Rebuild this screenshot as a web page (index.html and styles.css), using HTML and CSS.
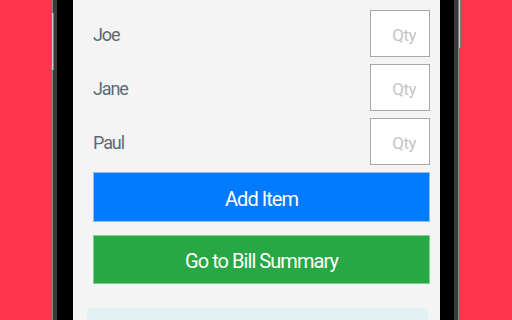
FILE: index.html
```html
<!DOCTYPE html>
<html>
<head>
<meta charset="utf-8">
<link rel="stylesheet" href="styles.css">
</head>
<body>
<div class="stage">
  <div class="bezel bezel-left">
    <span class="side-btn side-btn-left"></span>
  </div>
  <div class="screen">
    <div class="content">
      <div class="row"><span class="name">Joe</span><input class="qty" placeholder="Qty"></div>
      <div class="row"><span class="name">Jane</span><input class="qty" placeholder="Qty"></div>
      <div class="row"><span class="name">Paul</span><input class="qty" placeholder="Qty"></div>
      <button class="btn btn-blue">Add Item</button>
      <button class="btn btn-green">Go to Bill Summary</button>
    </div>
    <div class="info-box"></div>
  </div>
  <div class="bezel bezel-right">
    <span class="side-btn side-btn-right"></span>
  </div>
</div>
</body>
</html>
```

FILE: styles.css
```css
html, body {
  margin: 0;
  padding: 0;
  width: 512px;
  height: 320px;
  overflow: hidden;
  background: #fd344b;
}
.stage {
  display: flex;
  height: 320px;
  padding-left: 52px;
  box-sizing: border-box;
}
.bezel {
  position: relative;
  height: 320px;
  background: #000;
  box-sizing: border-box;
}
.bezel-left {
  width: 21px;
  border-left: 1px solid #8a8a8a;
  box-shadow: inset 4px 0 0 #3a3a3a;
}
.bezel-right {
  width: 19px;
  border-right: 1px solid #8a8a8a;
  box-shadow: inset -4px 0 0 #3a3a3a;
}
.side-btn {
  position: absolute;
  width: 3px;
  background: linear-gradient(90deg, #5a5a5a, #c8c8c8, #5a5a5a);
}
.side-btn-left {
  left: -2px;
  top: 13px;
  height: 57px;
}
.side-btn-right {
  right: -3px;
  top: 0;
  height: 48px;
}
.screen {
  width: 367px;
  height: 320px;
  overflow: hidden;
  background: #f4f4f4;
  box-sizing: border-box;
  padding: 10px 10px 0 20px;
  font-family: Roboto, "Liberation Sans", sans-serif;
}
.content {
  display: flex;
  flex-direction: column;
  width: 337px;
}
.row {
  display: flex;
  align-items: center;
  justify-content: space-between;
  height: 47px;
  margin-bottom: 7px;
}
.name {
  font-size: 18px;
  letter-spacing: -1.1px;
  color: #5c6a72;
  padding-top: 2px;
}
.qty {
  width: 60px;
  height: 47px;
  box-sizing: border-box;
  border: 1px solid #a8a8a8;
  background: #fff;
  font-family: Roboto, "Liberation Sans", sans-serif;
  font-size: 17px;
  letter-spacing: -0.5px;
  text-align: right;
  padding: 2px 13px 0 0;
  outline: none;
}
.qty::placeholder {
  color: #c4c4c4;
}
.btn {
  display: block;
  width: 337px;
  box-sizing: border-box;
  color: #fff;
  font-family: Roboto, "Liberation Sans", sans-serif;
  font-size: 20px;
  letter-spacing: -0.95px;
  padding: 3px 0 0 0;
  margin: 0;
}
.btn-blue {
  height: 50px;
  background: #007bff;
  border: 1px solid #8fbff0;
  margin-bottom: 13px;
}
.btn-green {
  height: 49px;
  background: #28a745;
  border: 1px solid #80d094;
}
.info-box {
  margin: 24px 0 0 -6px;
  width: 341px;
  height: 30px;
  background: #e1f1f2;
  border-radius: 5px;
}
```
